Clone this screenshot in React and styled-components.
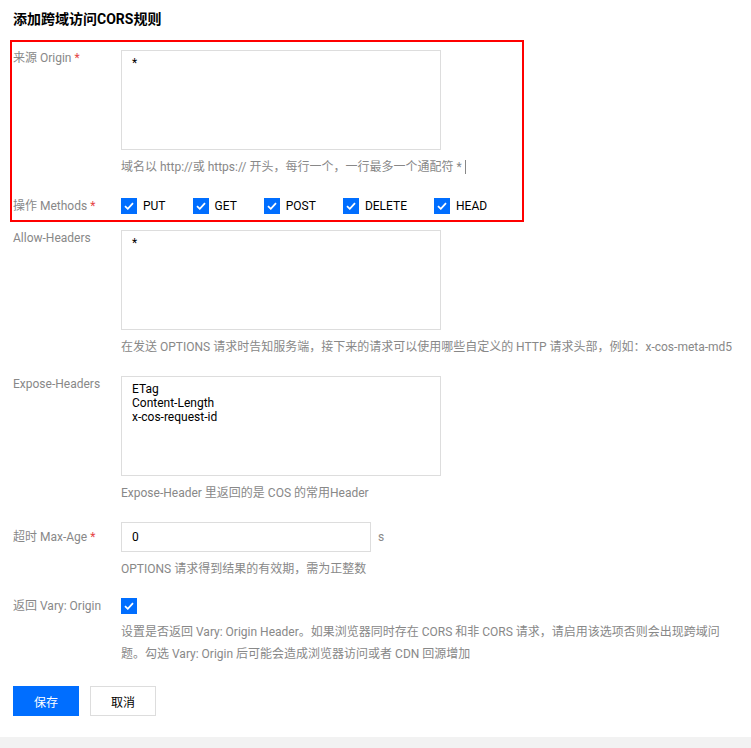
import React from "react";
import styled, { createGlobalStyle } from "styled-components";

const GlobalStyle = createGlobalStyle`
  html, body {
    margin: 0;
    padding: 0;
    background: #f2f2f2;
  }
  body {
    font-family: Roboto, "Noto Sans CJK SC", sans-serif;
    font-size: 12px;
    color: #000;
  }
`;

const Panel = styled.div`
  background: #fff;
  padding: 9px 13px 21px;
  box-shadow: 0 2px 3px rgba(0, 0, 0, 0.2);
`;

const Title = styled.h2`
  margin: 0 0 11px;
  font-size: 14px;
  line-height: 20px;
  font-weight: bold;
`;

const Highlight = styled.div`
  margin-left: -3px;
  padding: 8px 0 6px 1px;
  width: 514px;
  box-sizing: border-box;
  border: 2px solid #ff0000;
  margin-bottom: 8px;
`;

const Row = styled.div`
  display: flex;
  align-items: flex-start;
  margin-bottom: ${(p) => p.$gap ?? 20}px;
  padding-top: ${(p) => p.$top || 0}px;
`;

const Label = styled.div`
  width: 108px;
  flex-shrink: 0;
  color: #888;
  line-height: 16px;
  padding-top: ${(p) => p.$top || 0}px;
`;

const Required = styled.span`
  color: #e54545;
  margin-left: 3px;
`;

const Control = styled.div`
  display: flex;
  flex-direction: column;
  min-width: 0;
`;

const TextArea = styled.textarea`
  width: 320px;
  height: 100px;
  box-sizing: border-box;
  border: 1px solid #ddd;
  padding: 5px 10px;
  font: inherit;
  font-size: 12px;
  line-height: 14px;
  color: #000;
  resize: none;
  outline: none;
  margin: 0;
  display: block;
`;

const Help = styled.div`
  color: #888;
  line-height: ${(p) => (p.$wrap ? 22 : 18)}px;
  margin-top: ${(p) => (p.$wrap ? 7 : 8)}px;
  white-space: ${(p) => (p.$wrap ? "normal" : "nowrap")};
  max-width: ${(p) => (p.$wrap ? "602px" : "none")};
  display: flex;
  align-items: center;
`;

const Caret = styled.span`
  display: inline-block;
  width: 1px;
  height: 14px;
  background: #888;
  margin-left: 3px;
`;

const InputLine = styled.div`
  display: flex;
  align-items: center;
`;

const Input = styled.input`
  width: 250px;
  height: 30px;
  box-sizing: border-box;
  border: 1px solid #ddd;
  padding: 0 10px;
  font: inherit;
  font-size: 12px;
  color: #000;
  outline: none;
  margin: 0;
`;

const Unit = styled.span`
  color: #888;
  margin-left: 7px;
`;

const Methods = styled.div`
  display: flex;
  align-items: center;
  height: 16px;
`;

const Check = styled.label`
  display: flex;
  align-items: center;
  margin-right: ${(p) => p.$gap}px;
  line-height: 16px;
  color: #000;
`;

const Box = styled.span`
  width: 16px;
  height: 16px;
  background: #006eff;
  display: flex;
  align-items: center;
  justify-content: center;
  flex-shrink: 0;
  margin-right: ${(p) => (p.$bare ? 0 : 6)}px;
`;

const Actions = styled.div`
  display: flex;
  gap: 11px;
  margin-top: 21px;
`;

const Button = styled.button`
  width: 66px;
  height: 30px;
  box-sizing: border-box;
  font: inherit;
  font-size: 12px;
  cursor: pointer;
  border: 1px solid ${(p) => (p.$primary ? "#006eff" : "#ddd")};
  background: ${(p) => (p.$primary ? "#006eff" : "#fff")};
  color: ${(p) => (p.$primary ? "#fff" : "#000")};
  padding: 0;
`;

function Tick() {
  return (
    <svg width="10" height="8" viewBox="0 0 10 8">
      <path d="M1 4.2 L3.8 6.8 L9 1.2" fill="none" stroke="#fff" strokeWidth="1.8" />
    </svg>
  );
}

const methods = [
  { name: "PUT", gap: 27 },
  { name: "GET", gap: 27 },
  { name: "POST", gap: 27 },
  { name: "DELETE", gap: 27 },
  { name: "HEAD", gap: 0 },
];

export default function App() {
  return (
    <>
      <GlobalStyle />
      <Panel>
        <Title>添加跨域访问CORS规则</Title>
        <Highlight>
          <Row>
            <Label>
              来源 Origin<Required>*</Required>
            </Label>
            <Control>
              <TextArea readOnly defaultValue="*" />
              <Help>
                域名以 http://或 https:// 开头，每行一个，一行最多一个通配符 *
                <Caret />
              </Help>
            </Control>
          </Row>
          <Row $gap={0} $top={2}>
            <Label>
              操作 Methods<Required>*</Required>
            </Label>
            <Methods>
              {methods.map((m) => (
                <Check key={m.name} $gap={m.gap}>
                  <Box>
                    <Tick />
                  </Box>
                  {m.name}
                </Check>
              ))}
            </Methods>
          </Row>
        </Highlight>
        <Row>
          <Label>Allow-Headers</Label>
          <Control>
            <TextArea readOnly defaultValue="*" />
            <Help>
              在发送 OPTIONS 请求时告知服务端，接下来的请求可以使用哪些自定义的 HTTP 请求头部，例如：x-cos-meta-md5
            </Help>
          </Control>
        </Row>
        <Row>
          <Label>Expose-Headers</Label>
          <Control>
            <TextArea readOnly defaultValue={"ETag\nContent-Length\nx-cos-request-id"} />
            <Help>Expose-Header 里返回的是 COS 的常用Header</Help>
          </Control>
        </Row>
        <Row>
          <Label $top={7}>
            超时 Max-Age<Required>*</Required>
          </Label>
          <Control>
            <InputLine>
              <Input readOnly defaultValue="0" />
              <Unit>s</Unit>
            </InputLine>
            <Help>OPTIONS 请求得到结果的有效期，需为正整数</Help>
          </Control>
        </Row>
        <Row $gap={0}>
          <Label>返回 Vary: Origin</Label>
          <Control>
            <Box $bare>
              <Tick />
            </Box>
            <Help $wrap>
              设置是否返回 Vary: Origin Header。如果浏览器同时存在 CORS 和非 CORS 请求，请启用该选项否则会出现跨域问题。勾选 Vary: Origin 后可能会造成浏览器访问或者 CDN 回源增加
            </Help>
          </Control>
        </Row>
        <Actions>
          <Button $primary>保存</Button>
          <Button>取消</Button>
        </Actions>
      </Panel>
    </>
  );
}
